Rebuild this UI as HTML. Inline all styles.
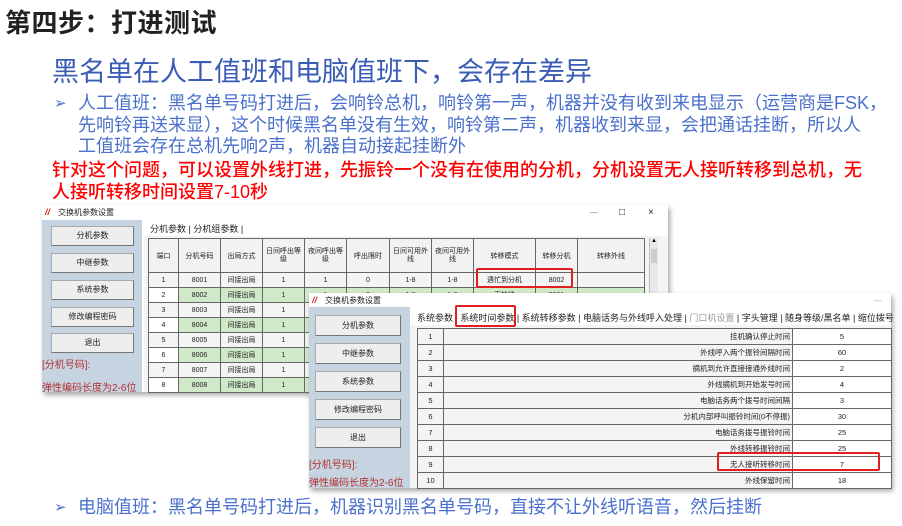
<!DOCTYPE html>
<html><head><meta charset="utf-8"><style>
*{margin:0;padding:0;box-sizing:border-box}
body{width:902px;height:526px;background:#fff;position:relative;overflow:hidden;font-family:"Liberation Sans","Noto Sans CJK SC",sans-serif}
.a{position:absolute;white-space:nowrap}
.t1{left:5px;top:3px;font-size:26px;color:#222;font-weight:bold;letter-spacing:0.5px}
.t2{left:52px;top:50px;font-size:27px;color:#3a5cb5}
.b{font-size:18px;color:#4a70cc;line-height:21.5px}
.r{font-size:18px;color:#f00;line-height:22px;font-weight:500}
.win{position:absolute;background:#fff;box-shadow:2px 3px 5px rgba(0,0,0,.35)}
.tb{position:absolute;left:0;top:0;right:0;height:15px;font-size:8px;color:#222;line-height:15px;padding-left:16px;background:#fff}
.logo{position:absolute;left:3px;top:3px;font-size:9px;font-weight:bold;color:#d22;font-style:italic;line-height:9px}
.lp{position:absolute;background:#c6d3e0}
.btn{position:absolute;background:#eeeeee;border:1px solid #aaa;border-right-color:#777;border-bottom-color:#777;font-size:8px;text-align:center;color:#222}
.rt{position:absolute;color:#b23030;font-size:10px;white-space:nowrap}
table{border-collapse:collapse;table-layout:fixed;position:absolute;font-size:7px;color:#222}
td{border:1px solid #666;text-align:center;overflow:hidden;white-space:nowrap}
.g td{background:#cfe9c9}
.g td:first-child{background:#fff}
.tabs{position:absolute;font-size:9px;color:#222;white-space:nowrap}
.box{position:absolute;border:2px solid #e02020;border-radius:2px}
</style></head><body>
<div class="a t1">第四步：打进测试</div>
<div class="a t2">黑名单在人工值班和电脑值班下，会存在差异</div>
<div class="a b" style="left:54px;top:93px;font-size:15px">➢</div>
<div class="a b" style="left:78px;top:93px">人工值班：黑名单号码打进后，会响铃总机，响铃第一声，机器并没有收到来电显示（运营商是FSK，<br>先响铃再送来显），这个时候黑名单没有生效，响铃第二声，机器收到来显，会把通话挂断，所以人<br>工值班会存在总机先响2声，机器自动接起挂断外</div>
<div class="a r" style="left:52px;top:159px">针对这个问题，可以设置外线打进，先振铃一个没有在使用的分机，分机设置无人接听转移到总机，无<br>人接听转移时间设置7-10秒</div>

<!-- window 1 -->
<div class="win" style="left:42px;top:205px;width:626px;height:187px">
 <div class="tb"><span class="logo">//</span>交换机参数设置<span style="position:absolute;left:548px;color:#888">—</span><span style="position:absolute;left:577px;font-size:10px">□</span><span style="position:absolute;left:606px;font-size:10px">×</span></div>
 <div class="lp" style="left:0;top:15px;width:100px;height:172px"></div>
 <div class="btn" style="left:9px;top:21px;width:83px;height:20px;line-height:18px">分机参数</div>
 <div class="btn" style="left:9px;top:48px;width:83px;height:20px;line-height:18px">中继参数</div>
 <div class="btn" style="left:9px;top:75px;width:83px;height:20px;line-height:18px">系统参数</div>
 <div class="btn" style="left:9px;top:102px;width:83px;height:20px;line-height:18px">修改编程密码</div>
 <div class="btn" style="left:9px;top:128px;width:83px;height:20px;line-height:18px">退出</div>
 <div class="rt" style="left:0;top:151px">[分机号码]:</div>
 <div class="rt" style="left:0;top:174px">弹性编码长度为2-6位</div>
 <div class="tabs" style="left:108px;top:17px">分机参数 | 分机组参数 |</div>
 <div style="position:absolute;left:102px;top:31px;width:524px;height:156px;background:#f4f4f4"></div>
 <table style="left:106px;top:33px;width:496px">
  <colgroup><col style="width:30px"><col style="width:42px"><col style="width:42px"><col style="width:42px"><col style="width:42px"><col style="width:43px"><col style="width:42px"><col style="width:42px"><col style="width:62px"><col style="width:42px"><col style="width:67px"></colgroup>
  <tr style="height:34px;background:#f2f2f2"><td>端口</td><td>分机号码</td><td>出局方式</td><td style="white-space:normal;line-height:8px">日间呼出等级</td><td style="white-space:normal;line-height:8px">夜间呼出等级</td><td>呼出限时</td><td style="white-space:normal;line-height:8px">日间可用外线</td><td style="white-space:normal;line-height:8px">夜间可用外线</td><td>转移模式</td><td>转移分机</td><td>转移外线</td></tr>
  <tr style="height:15px"><td>1</td><td>8001</td><td>间接出局</td><td>1</td><td>1</td><td>0</td><td>1-8</td><td>1-8</td><td>遇忙到分机</td><td>8002</td><td></td></tr>
  <tr class="g" style="height:15px"><td>2</td><td>8002</td><td>间接出局</td><td>1</td><td>1</td><td>0</td><td>1-8</td><td>1-8</td><td>无转移</td><td>8001</td><td></td></tr>
  <tr style="height:15px"><td>3</td><td>8003</td><td>间接出局</td><td>1</td><td></td><td></td><td></td><td></td><td></td><td></td><td></td></tr>
  <tr class="g" style="height:15px"><td>4</td><td>8004</td><td>间接出局</td><td>1</td><td></td><td></td><td></td><td></td><td></td><td></td><td></td></tr>
  <tr style="height:15px"><td>5</td><td>8005</td><td>间接出局</td><td>1</td><td></td><td></td><td></td><td></td><td></td><td></td><td></td></tr>
  <tr class="g" style="height:15px"><td>6</td><td>8006</td><td>间接出局</td><td>1</td><td></td><td></td><td></td><td></td><td></td><td></td><td></td></tr>
  <tr style="height:15px"><td>7</td><td>8007</td><td>间接出局</td><td>1</td><td></td><td></td><td></td><td></td><td></td><td></td><td></td></tr>
  <tr class="g" style="height:15px"><td>8</td><td>8008</td><td>间接出局</td><td>1</td><td></td><td></td><td></td><td></td><td></td><td></td><td></td></tr>
 </table>
 <div style="position:absolute;left:607px;top:33px;width:9px;height:154px;background:#e8e8e8;border-left:1px solid #bbb"><div style="height:9px;font-size:6px;text-align:center">▲</div><div style="height:14px;background:#ccc;margin:2px 1px"></div></div>
 <div class="box" style="left:434px;top:63px;width:97px;height:20px"></div>
</div>

<!-- window 2 -->
<div class="win" style="left:309px;top:293px;width:582px;height:195px">
 <div class="tb"><span class="logo">//</span>交换机参数设置<span style="position:absolute;left:565px;color:#aaa">—</span></div>
 <div class="lp" style="left:0;top:14px;width:101px;height:181px"></div>
 <div class="btn" style="left:6px;top:22px;width:86px;height:21px;line-height:19px">分机参数</div>
 <div class="btn" style="left:6px;top:50px;width:86px;height:21px;line-height:19px">中继参数</div>
 <div class="btn" style="left:6px;top:78px;width:86px;height:21px;line-height:19px">系统参数</div>
 <div class="btn" style="left:6px;top:106px;width:86px;height:21px;line-height:19px">修改编程密码</div>
 <div class="btn" style="left:6px;top:134px;width:86px;height:21px;line-height:19px">退出</div>
 <div class="rt" style="left:0;top:163px">[分机号码]:</div>
 <div class="rt" style="left:0;top:181px">弹性编码长度为2-6位</div>
 <div class="tabs" style="left:108px;top:18px">系统参数 | 系统时间参数 | 系统转移参数 | 电脑话务与外线呼入处理 | <span style="color:#999">门口机设置</span> | 字头管理 | 随身等级/黑名单 | 缩位拨号</div>
 <div style="position:absolute;left:101px;top:32px;width:481px;height:163px;background:#f4f4f4"></div>
 <table style="left:108px;top:35px;width:474px;font-size:7.5px">
  <colgroup><col style="width:26px"><col style="width:349px"><col style="width:99px"></colgroup>
  <tr style="height:16px"><td>1</td><td style="text-align:right;padding-right:2px">挂机确认停止时间</td><td style="background:#fff">5</td></tr>
  <tr style="height:16px"><td>2</td><td style="text-align:right;padding-right:2px">外线呼入两个振铃间隔时间</td><td style="background:#fff">60</td></tr>
  <tr style="height:16px"><td>3</td><td style="text-align:right;padding-right:2px">摘机到允许直接接通外线时间</td><td style="background:#fff">2</td></tr>
  <tr style="height:16px"><td>4</td><td style="text-align:right;padding-right:2px">外线摘机到开始发号时间</td><td style="background:#fff">4</td></tr>
  <tr style="height:16px"><td>5</td><td style="text-align:right;padding-right:2px">电脑话务两个拨号时间间隔</td><td style="background:#fff">3</td></tr>
  <tr style="height:16px"><td>6</td><td style="text-align:right;padding-right:2px">分机内部呼叫振铃时间(0不停振)</td><td style="background:#fff">30</td></tr>
  <tr style="height:16px"><td>7</td><td style="text-align:right;padding-right:2px">电脑话务拨号振铃时间</td><td style="background:#fff">25</td></tr>
  <tr style="height:16px"><td>8</td><td style="text-align:right;padding-right:2px">外线转移振铃时间</td><td style="background:#fff">25</td></tr>
  <tr style="height:16px"><td>9</td><td style="text-align:right;padding-right:2px">无人接听转移时间</td><td style="background:#fff">7</td></tr>
  <tr style="height:16px"><td>10</td><td style="text-align:right;padding-right:2px">外线保留时间</td><td style="background:#fff">18</td></tr>
 </table>
 <div class="box" style="left:146px;top:12px;width:61px;height:22px"></div>
 <div class="box" style="left:408px;top:159px;width:163px;height:19px"></div>
</div>

<div class="a b" style="left:54px;top:497px;font-size:15px">➢</div>
<div class="a b" style="left:78px;top:497px">电脑值班：黑名单号码打进后，机器识别黑名单号码，直接不让外线听语音，然后挂断</div>
</body></html>
